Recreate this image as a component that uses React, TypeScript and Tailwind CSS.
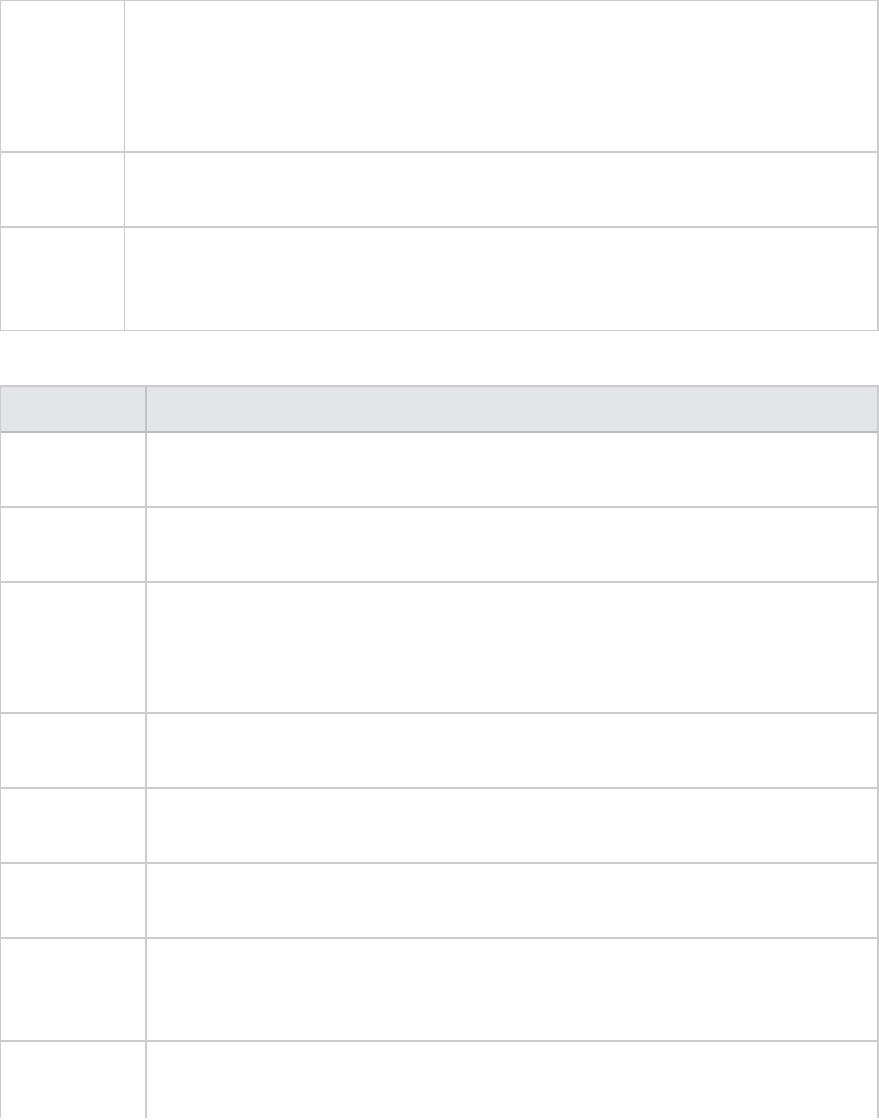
const topRows = ["h-[152px]", "h-[75px]", "h-[103px]"];
const bottomRows = [
  "h-[75px]",
  "h-[75px]",
  "h-[131px]",
  "h-[75px]",
  "h-[75px]",
  "h-[75px]",
  "h-[103px]",
  "h-[76px]",
];

function App() {
  return (
    <div className="w-[879px] bg-white font-['Liberation_Sans',sans-serif]">
      {/* first table */}
      <div className="border-t border-l border-r-2 border-[#cccccc]">
        {topRows.map((h, i) => (
          <div
            key={i}
            className={`${h} flex ${i === topRows.length - 1 ? "border-b" : "border-b-2"} border-[#cccccc]`}
          >
            <div className="w-[124px] shrink-0 border-r border-[#cccccc]" />
            <div className="flex-1" />
          </div>
        ))}
      </div>

      {/* second table */}
      <div className="mt-[54px] border-t-2 border-l border-r-2 border-[#cccccc]">
        <div className="h-[46px] flex bg-[#e3e6e6] border-b-2 border-[#bcbcbc]">
          <div className="w-[146px] shrink-0 border-r-2 border-[#c2c2c2]" />
          <div className="flex-1" />
        </div>
        {bottomRows.map((h, i) => (
          <div
            key={i}
            className={`${h} flex ${i === bottomRows.length - 1 ? "" : "border-b-2"} border-[#cccccc]`}
          >
            <div className="w-[146px] shrink-0 border-r-2 border-[#cccccc]" />
            <div className="flex-1" />
          </div>
        ))}
      </div>
    </div>
  );
}

export default App;
